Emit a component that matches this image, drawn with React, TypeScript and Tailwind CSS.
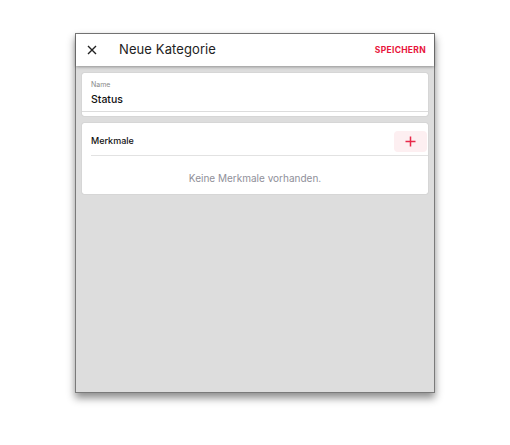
import React from "react";

export default function App() {
  const font = { fontFamily: "Inter, 'Noto Sans', sans-serif" };
  return (
    <div className="w-[510px] h-[445px] bg-white pl-[75px] pt-[33px]" style={font}>
      <div className="w-[360px] h-[360px] border border-[#7a7a7a] bg-[#dddddd] flex flex-col shadow-[0_5px_8px_rgba(0,0,0,0.45)]">
        <div className="h-[32px] bg-white flex items-center shrink-0 shadow-[0_1px_3px_rgba(0,0,0,0.35)] relative z-10">
          <svg className="ml-[11px]" width="10" height="10" viewBox="0 0 10 10">
            <path d="M1 1L9 9M9 1L1 9" stroke="#222" strokeWidth="1.4" />
          </svg>
          <span className="ml-[22px] text-[13px] text-[#222] tracking-[0.1px]">Neue Kategorie</span>
          <span className="ml-auto mr-[8px] text-[8.5px] font-bold text-[#e8163c] tracking-[0.3px]">SPEICHERN</span>
        </div>
        <div className="px-[6px] pt-[7px] flex flex-col gap-[7px]">
          <div className="bg-white rounded-[2px] shadow-[0_0_1px_rgba(0,0,0,0.3)] h-[43px] flex flex-col">
            <div className="pl-[9px] pt-[7px] text-[7px] text-[#8a8a8a] leading-[9px]">Name</div>
            <div className="pl-[9px] pt-[4px] text-[10.5px] font-medium text-[#111] leading-[13px]">Status</div>
            <div className="mt-[5px] h-px bg-[#dcdcdc]" />
          </div>
          <div className="bg-white rounded-[2px] shadow-[0_0_1px_rgba(0,0,0,0.3)] h-[71px] flex flex-col">
            <div className="h-[32px] pt-[4px] flex items-center pl-[9px] pr-[1px] shrink-0">
              <span className="text-[9px] font-medium text-[#111]">Merkmale</span>
              <div className="ml-auto w-[33px] h-[21px] rounded-[4px] bg-[#fdeff1] flex items-center justify-center">
                <svg width="11" height="11" viewBox="0 0 11 11">
                  <path d="M5.5 0.5V10.5M0.5 5.5H10.5" stroke="#e8294a" strokeWidth="1.5" />
                </svg>
              </div>
            </div>
            <div className="ml-[9px] h-px bg-[#e2e2e2] shrink-0" />
            <div className="flex-1 pt-[6px] flex items-center justify-center text-[10px] text-[#8f8f99]">
              Keine Merkmale vorhanden.
            </div>
          </div>
        </div>
      </div>
    </div>
  );
}
